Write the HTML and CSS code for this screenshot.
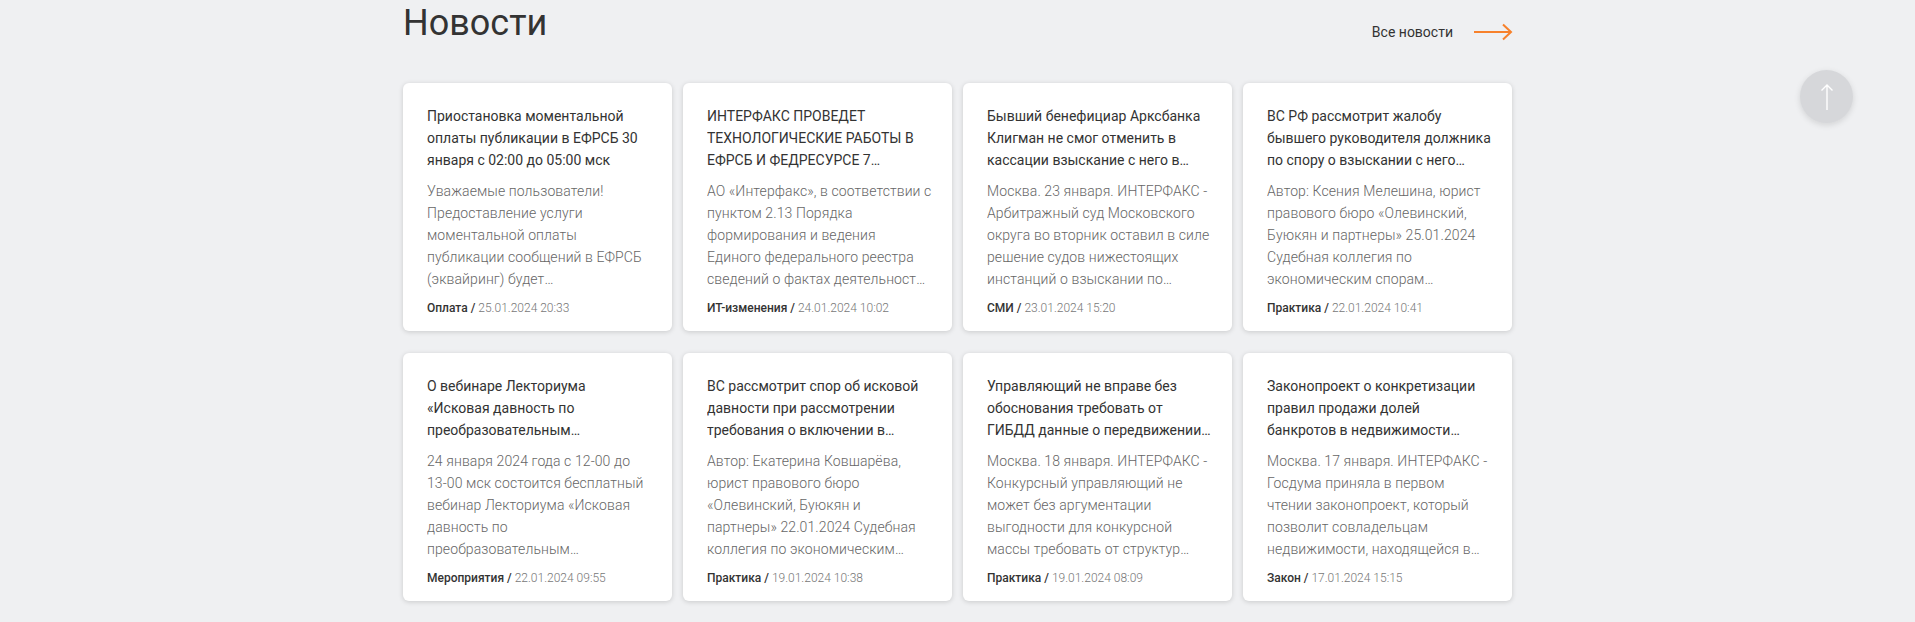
FILE: index.html
```html
<!DOCTYPE html>
<html lang="ru">
<head>
<meta charset="utf-8">
<title>Новости</title>
<link rel="stylesheet" href="styles.css">
</head>
<body>
<section class="news">
  <div class="news-head">
    <h2 class="news-title">Новости</h2>
    <a class="all-link" href="#">
      <span>Все новости</span>
      <svg class="all-arrow" width="40" height="18" viewBox="0 0 40 18"><path d="M1 9H38M30 1.5L38 9L30 16.5" fill="none" stroke="#f7812b" stroke-width="2"/></svg>
    </a>
  </div>
  <div class="grid">
    <article class="card">
      <h3 class="card-title">Приостановка моментальной оплаты публикации в ЕФРСБ 30 января с 02:00 до 05:00 мск</h3>
      <p class="card-text">Уважаемые пользователи! Предоставление услуги моментальной оплаты публикации сообщений в ЕФРСБ (эквайринг) будет приостановлено 30 января</p>
      <div class="card-meta"><b>Оплата /</b> 25.01.2024 20:33</div>
    </article>
    <article class="card">
      <h3 class="card-title">ИНТЕРФАКС ПРОВЕДЕТ ТЕХНОЛОГИЧЕСКИЕ РАБОТЫ В ЕФРСБ И ФЕДРЕСУРСЕ 7 ФЕВРАЛЯ</h3>
      <p class="card-text">АО «Интерфакс», в соответствии с пунктом 2.13 Порядка формирования и ведения Единого федерального реестра сведений о фактах деятельности юридических лиц</p>
      <div class="card-meta"><b>ИТ-изменения /</b> 24.01.2024 10:02</div>
    </article>
    <article class="card">
      <h3 class="card-title">Бывший бенефициар Арксбанка Клигман не смог отменить в кассации взыскание с него в пользу банка</h3>
      <p class="card-text">Москва. 23 января. ИНТЕРФАКС - Арбитражный суд Московского округа во вторник оставил в силе решение судов нижестоящих инстанций о взыскании по субсидиарной ответственности</p>
      <div class="card-meta"><b>СМИ /</b> 23.01.2024 15:20</div>
    </article>
    <article class="card">
      <h3 class="card-title">ВС РФ рассмотрит жалобу бывшего руководителя должника по спору о взыскании с него убытков</h3>
      <p class="card-text">Автор: Ксения Мелешина, юрист правового бюро «Олевинский, Буюкян и партнеры» 25.01.2024 Судебная коллегия по экономическим спорам Верховного суда</p>
      <div class="card-meta"><b>Практика /</b> 22.01.2024 10:41</div>
    </article>
    <article class="card">
      <h3 class="card-title">О вебинаре Лекториума «Исковая давность по преобразовательным требованиям»</h3>
      <p class="card-text">24 января 2024 года с 12-00 до <span class="nowrap">13-00</span> мск состоится бесплатный вебинар Лекториума «Исковая давность по преобразовательным требованиям»</p>
      <div class="card-meta"><b>Мероприятия /</b> 22.01.2024 09:55</div>
    </article>
    <article class="card">
      <h3 class="card-title">ВС рассмотрит спор об исковой давности при рассмотрении требования о включении в реестр требований кредиторов</h3>
      <p class="card-text">Автор: Екатерина Ковшарёва, юрист правового бюро «Олевинский, Буюкян и партнеры» 22.01.2024 Судебная коллегия по экономическим спорам Верховного суда</p>
      <div class="card-meta"><b>Практика /</b> 19.01.2024 10:38</div>
    </article>
    <article class="card">
      <h3 class="card-title">Управляющий не вправе без обоснования требовать от ГИБДД данные о передвижении автомобиля</h3>
      <p class="card-text">Москва. 18 января. ИНТЕРФАКС - Конкурсный управляющий не может без аргументации выгодности для конкурсной массы требовать от структур МВД сведения</p>
      <div class="card-meta"><b>Практика /</b> 19.01.2024 08:09</div>
    </article>
    <article class="card">
      <h3 class="card-title">Законопроект о конкретизации правил продажи долей банкротов в недвижимости внесен в Госдуму</h3>
      <p class="card-text">Москва. 17 января. ИНТЕРФАКС - Госдума приняла в первом чтении законопроект, который позволит совладельцам недвижимости, находящейся в долевой собственности</p>
      <div class="card-meta"><b>Закон /</b> 17.01.2024 15:15</div>
    </article>
  </div>
</section>
<a class="to-top" href="#" aria-label="Наверх">
  <svg width="20" height="28" viewBox="0 0 20 28"><path d="M10 2V27M4.5 7.5L10 2L15.5 7.5" fill="none" stroke="#ffffff" stroke-width="1.4"/></svg>
</a>
</body>
</html>
```
FILE: styles.css
```css
html, body {
  margin: 0;
  padding: 0;
}
body {
  background: #eff0f2;
  font-family: Roboto, "Liberation Sans", Arial, sans-serif;
  color: #333333;
  height: 622px;
  overflow: hidden;
}
.news {
  width: 1109px;
  margin: 0 auto;
}
.news-head {
  display: flex;
  justify-content: space-between;
  align-items: flex-start;
  height: 83px;
}
.news-title {
  margin: 0;
  font-size: 36px;
  line-height: 46px;
  font-weight: 400;
  color: #333333;
}
.all-link {
  display: flex;
  align-items: center;
  gap: 20px;
  margin-top: 22px;
  text-decoration: none;
  color: #333333;
  font-size: 14px;
  line-height: 20px;
  margin-right: -1px;
}
.all-arrow {
  display: block;
}
.grid {
  display: grid;
  grid-template-columns: repeat(4, 269px);
  column-gap: 11px;
  row-gap: 22px;
}
.card {
  background: #ffffff;
  border-radius: 6px;
  box-shadow: 0 1px 5px rgba(0, 0, 0, 0.16);
  padding: 22px 21px 15px 24px;
  height: 248px;
  box-sizing: border-box;
  display: flex;
  flex-direction: column;
}
.card-title {
  margin: 0;
  font-size: 14px;
  line-height: 22px;
  font-weight: 400;
  color: #333333;
  height: 66px;
  display: -webkit-box;
  -webkit-box-orient: vertical;
  -webkit-line-clamp: 3;
  overflow: hidden;
}
.card-text {
  margin: 9px -2px 0 0;
  font-size: 14px;
  line-height: 22px;
  font-weight: 300;
  letter-spacing: 0.1px;
  color: #666666;
  height: 110px;
  display: -webkit-box;
  -webkit-box-orient: vertical;
  -webkit-line-clamp: 5;
  overflow: hidden;
}
.nowrap {
  white-space: nowrap;
}
.card-meta {
  margin-top: 10px;
  font-size: 12px;
  line-height: 16px;
  font-weight: 300;
  color: #777777;
}
.card-meta b {
  font-weight: 500;
  color: #333333;
}
.to-top {
  position: fixed;
  left: 1800px;
  top: 70px;
  width: 53px;
  height: 53px;
  border-radius: 50%;
  background: #d6d7da;
  box-shadow: 0 2px 6px rgba(0, 0, 0, 0.12);
  display: flex;
  align-items: center;
  justify-content: center;
}
.to-top svg {
  display: block;
}
```
